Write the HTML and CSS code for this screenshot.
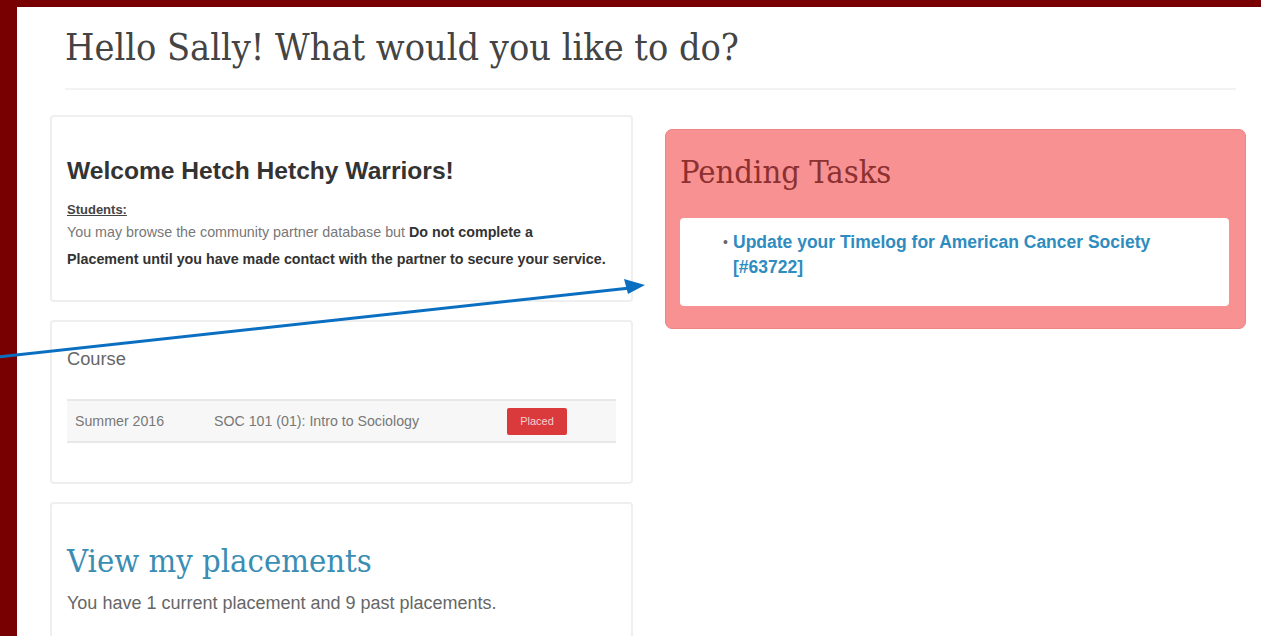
FILE: index.html
```html
<!DOCTYPE html>
<html lang="en">
<head>
<meta charset="utf-8">
<title>Dashboard</title>
<link rel="stylesheet" href="styles.css">
</head>
<body>
<div class="page">
  <h1 class="page-title">Hello Sally! What would you like to do?</h1>

  <div class="columns">
    <div class="col col-left">
      <section class="card welcome">
        <h2 class="welcome-title">Welcome Hetch Hetchy Warriors!</h2>
        <p class="label">Students:</p>
        <p class="notice">You may browse the community partner database but <strong>Do not complete a<br>Placement until you have made contact with the partner to secure your service.</strong></p>
      </section>

      <section class="card course">
        <h3 class="course-title">Course</h3>
        <table class="course-table">
          <tr>
            <td class="term">Summer 2016</td>
            <td class="name">SOC 101 (01): Intro to Sociology</td>
            <td class="status"><span class="badge">Placed</span></td>
          </tr>
        </table>
      </section>

      <section class="card placements">
        <h2 class="placements-title"><a href="#">View my placements</a></h2>
        <p class="placements-text">You have 1 current placement and 9 past placements.</p>
      </section>
    </div>

    <div class="col col-right">
      <section class="pending">
        <h2 class="pending-title">Pending Tasks</h2>
        <div class="task-box">
          <ul class="task-list">
            <li><a href="#">Update your Timelog for American Cancer Society [#63722]</a></li>
          </ul>
        </div>
      </section>
    </div>
  </div>

  <svg class="pointer" width="660" height="100" viewBox="0 0 660 100">
    <line x1="-20" y1="75" x2="630" y2="4" stroke="#0b6fc1" stroke-width="3"/>
    <polygon points="645,1 624,-5 628,10" fill="#0b6fc1"/>
  </svg>
</div>
</body>
</html>
```

FILE: styles.css
```css
html, body {
  margin: 0;
  padding: 0;
}

body {
  background: #780000;
  font-family: "Liberation Sans", Arial, sans-serif;
  color: #555;
  overflow: hidden;
}

.page {
  position: relative;
  margin: 7px 0 0 17px;
  background: #fff;
  height: 629px;
  padding: 0 15px 0 33px;
  box-sizing: border-box;
}

/* page heading with a faint rule under it */
.page-title {
  margin: 0 10px 25px 15px;
  padding: 18px 0 19px;
  font-family: "DejaVu Serif Condensed", "DejaVu Serif", serif;
  font-weight: normal;
  font-size: 37.5px;
  line-height: 44px;
  color: #444;
  border-bottom: 2px solid #f2f2f2;
}

.columns {
  display: flex;
  gap: 32px;
  align-items: flex-start;
}

.col-left {
  width: 583px;
  display: flex;
  flex-direction: column;
  gap: 18px;
}

.col-right {
  flex: 1;
  padding-top: 14px;
}

.card {
  border: 2px solid #efefef;
  border-radius: 4px;
  background: #fff;
  padding: 0 15px;
  box-sizing: border-box;
}

/* welcome notice */
.welcome {
  height: 187px;
  padding-top: 40px;
}

.welcome-title {
  margin: 0 0 16px;
  font-size: 24.6px;
  line-height: 28px;
  color: #333;
}

.label {
  margin: 0;
  font-size: 13px;
  line-height: 18px;
  font-weight: bold;
  text-decoration: underline;
  color: #444;
}

.notice {
  margin: 0;
  font-size: 14.3px;
  line-height: 27px;
  color: #777;
}

.notice strong {
  color: #333;
}

/* course list */
.course {
  height: 164px;
  padding-top: 25px;
}

.course-title {
  margin: 0 0 28px;
  font-weight: normal;
  font-size: 18.3px;
  line-height: 24px;
  color: #666;
}

.course-table {
  width: 100%;
  border-collapse: collapse;
  border-top: 2px solid #e8e8e8;
  border-bottom: 2px solid #e8e8e8;
  background: #f7f7f7;
}

.course-table td {
  height: 40px;
  padding: 0 8px;
  font-size: 14.2px;
  color: #777;
}

.course-table .term {
  width: 123px;
}

.course-table .name {
  width: 277px;
}

.badge {
  display: inline-block;
  width: 60px;
  height: 27px;
  line-height: 27px;
  text-align: center;
  background: #da3a3c;
  color: #f6d0d0;
  font-size: 11px;
  border-radius: 2px;
}

/* placements summary */
.placements {
  height: 160px;
  padding-top: 38px;
}

.placements-title {
  margin: 0 0 12px;
  font-family: "DejaVu Serif Condensed", "DejaVu Serif", serif;
  font-weight: normal;
  font-size: 32.5px;
  line-height: 38px;
}

.placements-title a {
  color: #3a8db3;
  text-decoration: none;
}

.placements-text {
  margin: 0;
  font-size: 18px;
  line-height: 22px;
  color: #666;
}

/* pending tasks panel */
.pending {
  background: #f89292;
  border: 1px solid #ee8686;
  border-radius: 7px;
  padding: 22px 16px 22px 14px;
}

.pending-title {
  margin: 0 0 26px;
  font-family: "DejaVu Serif Condensed", "DejaVu Serif", serif;
  font-weight: normal;
  font-size: 32.5px;
  line-height: 40px;
  color: #8c3030;
}

.task-box {
  background: #fff;
  border-radius: 4px;
  padding: 12px 40px 26px 53px;
}

.task-list {
  margin: 0;
  padding: 0;
  list-style: none;
}

.task-list li {
  position: relative;
  font-size: 17.5px;
  line-height: 25px;
  font-weight: bold;
}

.task-list li::before {
  content: "\2022";
  position: absolute;
  left: -10px;
  color: #666;
  font-weight: normal;
  font-size: 14px;
}

.task-list a {
  color: #2e8cbf;
  text-decoration: none;
}

/* callout arrow drawn over the page */
.pointer {
  position: absolute;
  left: -17px;
  top: 277px;
  overflow: visible;
}
```
